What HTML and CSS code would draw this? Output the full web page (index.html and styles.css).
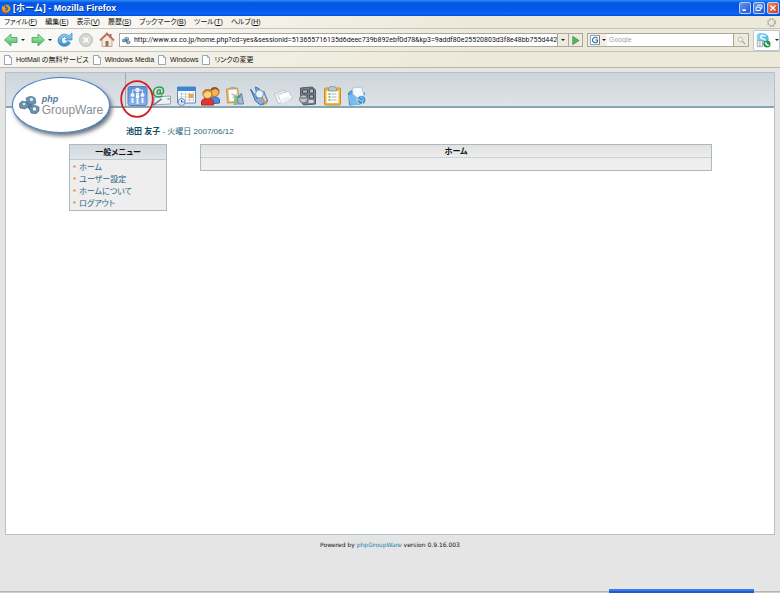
FILE: index.html
```html
<!DOCTYPE html>
<html lang="ja">
<head>
<meta charset="utf-8">
<title>[ホーム] - Mozilla Firefox</title>
<link rel="stylesheet" href="styles.css">
</head>
<body>
<svg class="defs" aria-hidden="true">
  <defs>
    <linearGradient id="green" x2="0" y2="1"><stop stop-color="#b5edac"/><stop offset="1" stop-color="#43b766"/></linearGradient>
    <linearGradient id="sky" x2="0" y2="1"><stop stop-color="#9ed7f5"/><stop offset="1" stop-color="#3189cc"/></linearGradient>
    <linearGradient id="tile" x2="0" y2="1"><stop stop-color="#5b8fd8"/><stop offset="1" stop-color="#8cb2e8"/></linearGradient>
    <symbol id="page" viewBox="0 0 10 10"><path d="M1.5.5h5l2 2v7h-7z" fill="#fff" stroke="#7b93ad" stroke-width=".8"/><path d="M6.5.5v2h2" fill="#d8e3ee" stroke="#7b93ad" stroke-width=".7"/></symbol>
    <symbol id="molecule" viewBox="0 0 22 18"><path d="M3 8l8-4 3 3-1 3 5 3-1 3-4 1-4-5-6-1z" fill="#557f9d"/><path d="M0 8l3-3 5 1 2 4-4 3-5-1zM7 2l5-2 4 2 1 5-4 2-5-2zM10 11l5-2 5 2v4l-3 3-5-1z" fill="#6991ad" stroke="#416a89" stroke-width=".6"/><circle cx="5" cy="8" r="1.300" fill="#dbe9f1"/><circle cx="12.500" cy="3.500" r="1.700" fill="#dbe9f1"/><circle cx="15.500" cy="13" r="1.700" fill="#eef6fa"/></symbol>
  </defs>
</svg>

<header class="browser">
  <div class="titlebar">
    <svg class="fox" viewBox="0 0 12 12"><circle cx="6" cy="6" r="5" fill="#246fc5"/><path d="M5 2c4-1 7 4 4 7-3 4-9 2-8-3L1 3l2 1 2-2-1 3 2 1-2 1c0 2 4 2 4-1z" fill="#f79b20"/><path d="M1 5c0 5 5 7 9 3-1 4-8 5-9 0z" fill="#d74a16"/></svg>
    <span class="window-title">[ホーム] - Mozilla Firefox</span>
    <div class="window-buttons">
      <button aria-label="最小化"><svg viewBox="0 0 12 12"><path d="M3 8.5h4" stroke="#fff" stroke-width="2"/></svg></button>
      <button aria-label="元に戻す"><svg viewBox="0 0 12 12"><path d="M4.5 4V2.5h5v4H8M2.5 5h5v4h-5z" fill="none" stroke="#fff" stroke-width="1.2"/></svg></button>
      <button class="close" aria-label="閉じる"><svg viewBox="0 0 12 12"><path d="M3 3l6 6M9 3l-6 6" stroke="#fff" stroke-width="1.6"/></svg></button>
    </div>
  </div>

  <nav class="menubar" aria-label="メニューバー">
    <button>ファイル(<u>F</u>)</button>
    <button>編集(<u>E</u>)</button>
    <button>表示(<u>V</u>)</button>
    <button>履歴(<u>S</u>)</button>
    <button>ブックマーク(<u>B</u>)</button>
    <button>ツール(<u>T</u>)</button>
    <button>ヘルプ(<u>H</u>)</button>
    <svg class="throbber" viewBox="0 0 12 12"><circle cx="6" cy="6" r="3.8" fill="none" stroke="#a9a9a0" stroke-width="2" stroke-dasharray="2 1"/></svg>
  </nav>

  <div class="toolbar">
    <div class="nav-buttons">
      <button class="with-arrow" aria-label="戻る"><svg viewBox="0 0 16 16"><path d="M1.500 8L8 2v3.500h6v5H8V14z" fill="url(#green)" stroke="#3da45b" stroke-width=".8"/></svg><i class="caret"></i></button>
      <button class="with-arrow" aria-label="進む"><svg viewBox="0 0 16 16"><path d="M14.500 8L8 2v3.500H2v5h6V14z" fill="url(#green)" stroke="#3da45b" stroke-width=".8"/></svg><i class="caret"></i></button>
      <button aria-label="更新"><svg viewBox="0 0 16 16"><path d="M12 4C8 0 1 3 1 8.500 1 14 9 17 13.500 11l-3-2c-2 4-6 3-6-.5C4.500 5 8 4 10 6L8 8h7V1z" fill="url(#sky)" stroke="#3384c1" stroke-width=".7"/></svg></button>
      <button aria-label="中止"><svg viewBox="0 0 16 16"><circle cx="8" cy="8" r="6.500" fill="#d5d5d1" stroke="#bebebb"/><path d="M5.500 5.500l5 5m0-5l-5 5" stroke="#fff" stroke-width="1.700"/></svg></button>
      <button aria-label="ホーム"><svg viewBox="0 0 16 16"><path d="M3 7v7.500h10V7L8 3z" fill="#f4e9dd" stroke="#a88b79" stroke-width=".7"/><path d="M10.500 2h2v4h-2z" fill="#b9674b"/><path d="M1 8.500L8 1.500l7 7" fill="none" stroke="#bd7358" stroke-width="1.800"/><path d="M6.500 9h3v5.500h-3z" fill="#9d7257"/></svg></button>
    </div>
    <form class="address">
      <svg viewBox="0 0 22 18"><use href="#molecule"/></svg>
      <input type="text" aria-label="アドレス" value="http://www.xx.co.jp/home.php?cd=yes&amp;sessionid=513655716135d6deec739b892ebf0d78&amp;kp3=9addf80e25520803d3f8e48bb755d442&amp;dor">
      <button type="button" class="drop" aria-label="履歴を表示"><i class="caret"></i></button>
      <button type="button" class="go" aria-label="移動"><svg viewBox="0 0 12 12"><path d="M3 1.500L10 6l-7 4.500z" fill="#56b45c" stroke="#2f8850" stroke-width=".7"/></svg></button>
    </form>
    <form class="search">
      <button type="button" class="engine" aria-label="検索エンジン"><svg viewBox="0 0 12 12"><path d="M.5.5h11v11H.5z" fill="#fff" stroke="#5c89b5"/><path d="M9 4C7 1.500 3 3 3 6s4 4.500 6 2V6H6.500" fill="none" stroke="#296ba8" stroke-width="1.400"/><path d="M11.500 1v5" stroke="#d64e3e"/><path d="M11.500 6v5" stroke="#3a9b4c"/></svg><i class="caret"></i></button>
      <input type="text" aria-label="検索" placeholder="Google">
      <button type="button" class="find" aria-label="検索する"><svg viewBox="0 0 12 12"><circle cx="4.500" cy="4.500" r="3" fill="#eef3f5" stroke="#a3abaf"/><path d="M7 7l4 4" stroke="#a6aba8" stroke-width="1.700"/></svg></button>
    </form>
    <button class="phone" aria-label="Skype"><svg viewBox="0 0 18 18"><circle cx="9" cy="8" r="6.500" fill="#56bde9"/><circle cx="6" cy="5" r="4" fill="#81d0ef"/><path d="M12 5C9 2.500 5 4.500 7 7c1 1 5 .5 5 3s-4 2.500-6 .5" fill="none" stroke="#fff" stroke-width="1.500"/><path d="M2.500 9.500h6v7h-6z" fill="#eee" stroke="#9da5a9"/><path d="M5.500 10v6" stroke="#a8b0b5"/><circle cx="13.500" cy="13.500" r="4" fill="#259447"/><path d="M12 11.500c0 2 1 3.500 3.500 3.500" fill="none" stroke="#fff" stroke-width="1.500"/></svg><i class="caret"></i></button>
  </div>

  <nav class="bookmarks" aria-label="ブックマーク">
    <a href="#"><svg viewBox="0 0 10 10"><use href="#page"/></svg>HotMail の無料サービス</a>
    <a href="#"><svg viewBox="0 0 10 10"><use href="#page"/></svg>Windows Media</a>
    <a href="#"><svg viewBox="0 0 10 10"><use href="#page"/></svg>Windows</a>
    <a href="#"><svg viewBox="0 0 10 10"><use href="#page"/></svg>リンクの変更</a>
  </nav>
</header>

<div class="viewport">
  <main class="site">
    <div class="site-header">
      <a class="logo" href="#" aria-label="phpGroupWare">
        <svg class="logo-mark" viewBox="0 0 22 18"><use href="#molecule"/></svg>
        <span class="logo-text"><em>php</em><span>GroupWare</span></span>
      </a>
      <nav class="apps" aria-label="アプリケーション">
        <a class="active" href="#" aria-label="ホーム"><svg viewBox="0 0 20 20"><rect x=".5" y=".5" width="19" height="19" rx="2" fill="url(#tile)" stroke="#5580c3"/><g fill="#eef5ff"><circle cx="5" cy="9" r="2"/><circle cx="10" cy="4" r="2.300"/><circle cx="15" cy="9" r="2"/><path d="M8.500 7h3v3h-3zM4 12h2v5H4zM9 13h2v5H9zM14 12h2v5h-2z"/></g><path d="M5 7V4h10v3M10 6v6" fill="none" stroke="#d6e6fa"/><circle cx="10" cy="11" r="1.800" fill="#fff"/></svg></a>
        <a href="#" aria-label="メール"><svg viewBox="0 0 20 20"><path d="M3 11l16-1v8L2 19z" fill="#edf1f6" stroke="#9aa6b2"/><path d="M2 19l8-6" stroke="#616c80" stroke-width="1.500"/><path d="M16 12h2v2h-2z" fill="#9ba9c2"/><path d="M9 4c-3-1-5 4-2 4 2 0 2-4 2-4s-1 4 1 4c3-1 3-7-2-7C0 1 0 11 7 11c2 0 3-.5 4-1" fill="none" stroke="#2e9c50" stroke-width="1.400"/></svg></a>
        <a href="#" aria-label="カレンダー"><svg viewBox="0 0 20 20"><path d="M1 1h18v16H1z" fill="#fff" stroke="#6387be"/><path d="M1 1h18v4H1z" fill="#3a87d3"/><path d="M3 8h14M3 11h14M3 14h14M5 6v10M9 6v10M13 6v10M17 6v10" stroke="#b4c9df" stroke-width=".8"/><path d="M12 8h5v4h-5z" fill="#f3a33c"/><circle cx="5" cy="16" r="3.500" fill="#d5e4f3" stroke="#7190b7"/><path d="M5 14v2h2" fill="none" stroke="#4d6891"/></svg></a>
        <a href="#" aria-label="アドレス帳"><svg viewBox="0 0 20 20"><path d="M9 18v-4c0-4 10-4 10 0v3z" fill="#4f8ce1" stroke="#3463b0"/><circle cx="14" cy="6" r="4.500" fill="#f3b64f" stroke="#a46231"/><path d="M10 5c0-5 8-5 9 0l-4-2z" fill="#9a542a"/><path d="M1 19v-3c0-5 12-5 12 0v3z" fill="#df3832" stroke="#b22726"/><circle cx="7" cy="8" r="4.500" fill="#ffd278" stroke="#ad672d"/><path d="M2 8c0-6 9-6 10-1L7 5z" fill="#c47935"/></svg></a>
        <a href="#" aria-label="プロジェクト"><svg viewBox="0 0 20 20"><path d="M2 3l11-1 2 14-12 1z" fill="#e9bd68" stroke="#c59448"/><path d="M4 4l8-.5 2 11-9 1z" fill="#fff"/><path d="M5 3c0-3 6-3 6 0" fill="#9ca9b0"/><path d="M7 8l5 2M8 12l7-5" stroke="#bbb" stroke-width="1.500"/><path d="M10 10h4l-1 9H9z" fill="#8dba8d"/><path d="M13 13l4-6 2 11h-5z" fill="#a9b8d7" stroke="#6582ab"/><path d="M12 11l4-3v4z" fill="#4da34b"/></svg></a>
        <a href="#" aria-label="検索"><svg viewBox="0 0 20 20"><path d="M1 3l5 12 5 4 4-2L10 3 6 1l2 12z" fill="#84afe1" stroke="#396cab"/><path d="M14 5l4 10-5 4" fill="none" stroke="#5c8ccb" stroke-width="1.500"/><circle cx="10" cy="8" r="4" fill="#e6f3fb" stroke="#809bb8"/><path d="M12 12l5 6" stroke="#df9744" stroke-width="2.200"/></svg></a>
        <a href="#" aria-label="文書"><svg viewBox="0 0 20 20"><path d="M1 8l10-4 4 9-10 5z" fill="#f5f8fb" stroke="#bbc5ce"/><path d="M4 9l11-4 4 7-10 6z" fill="#fff" stroke="#bec8d2"/><path d="M6 14l9-4 2 3-8 5z" fill="#edf1f7"/></svg></a>
        <a href="#" aria-label="ファイル管理"><svg viewBox="0 0 20 20"><path d="M3 2l12-1 3 3v14l-12 1-3-4z" fill="#777f8a" stroke="#535c68"/><path d="M5 4h5v3H5zM12 3h4v4h-4zM5 9h5v3H5zM12 9h4v3h-4z" fill="#b7c0c9" stroke="#444f5b"/><circle cx="6" cy="13" r="4" fill="#bec6d0" stroke="#6d7582"/><path d="M11 14h5v3h-5z" fill="#d4d8dd"/><path d="M3 12h6" stroke="#555e69"/></svg></a>
        <a href="#" aria-label="タスク"><svg viewBox="0 0 20 20"><rect x="2" y="2" width="16" height="17" rx="1" fill="#f0b83e" stroke="#c88d2a"/><path d="M4 5h12v12H4z" fill="#fff"/><path d="M6 4c0-5 8-5 8 0v1H6z" fill="#bcc6cd" stroke="#8b969d"/><path d="M6 8h2M6 11h2M6 14h2" stroke="#69a64e" stroke-width="1.500"/><path d="M9 8h5M9 11h5M9 14h5" stroke="#a3afbb"/></svg></a>
        <a href="#" aria-label="共有フォルダー"><svg viewBox="0 0 20 20"><path d="M2 7l4-3 3 3h9l-3 11-12 1z" fill="#5ca3df" stroke="#3d80be"/><path d="M6 2l9-1 3 10-11 2z" fill="#f7fafc" stroke="#b7c8d6"/><path d="M1 9h7l2 2h6l-4 8H4z" fill="#76bced"/><circle cx="15" cy="14" r="4.500" fill="#3c91ce" stroke="#fff" stroke-width=".7"/><path d="M14 11c5 2 1 5 2 7M11 13l4 2" fill="none" stroke="#d0e8f6"/></svg></a>
      </nav>
      <svg class="marker" viewBox="0 0 34 38" aria-hidden="true"><ellipse cx="17" cy="19" rx="15.800" ry="17.800" fill="none" stroke="#d31d26" stroke-width="1.800"/></svg>
    </div>

    <p class="user"><strong>池田 友子</strong> - 火曜日 2007/06/12</p>

    <div class="columns">
      <section class="panel sidebar">
        <h2>一般メニュー</h2>
        <ul>
          <li><a href="#">ホーム</a></li>
          <li><a href="#">ユーザー設定</a></li>
          <li><a href="#">ホームについて</a></li>
          <li><a href="#">ログアウト</a></li>
        </ul>
      </section>
      <section class="panel home">
        <h1>ホーム</h1>
        <div class="panel-body"></div>
      </section>
    </div>
  </main>
  <footer>Powered by <a href="#">phpGroupWare</a> version 0.9.16.003</footer>
  <div class="statusbar"><div class="language-bar"></div></div>
</div>
</body>
</html>
```
FILE: styles.css
```css
* { box-sizing: border-box; }

body {
  margin: 0;
  min-height: 100vh;
  display: flex;
  flex-direction: column;
  background: #e5e5e5;
  color: #111;
  font: 8px/12px "Liberation Sans", "Noto Sans CJK JP", sans-serif;
  font-feature-settings: "palt";
}

button, input { font: inherit; font-feature-settings: inherit; color: inherit; border: 0; padding: 0; margin: 0; background: none; }
button { display: flex; align-items: center; justify-content: center; }
a { color: inherit; text-decoration: none; }
svg { display: block; flex: none; }
h1, h2, p, ul { margin: 0; padding: 0; }
.defs { position: absolute; width: 0; height: 0; }

.caret {
  flex: none;
  border: 2px solid transparent;
  border-top-color: #222;
  border-bottom: 0;
}

/* Browser window */
.titlebar {
  display: flex;
  align-items: center;
  gap: 1px;
  height: 16px;
  padding: 0 1px;
  background: linear-gradient(#2b91fa 0, #0754e2 3px, #0559ef 10px, #0767fb 14px, #0444c1);
  color: #fff;
}
.fox { width: 11px; height: 11px; }
.window-title {
  flex: 1;
  font: bold 9px/14px "Liberation Sans", "Noto Sans CJK JP", sans-serif;
  text-shadow: 1px 1px #08378f;
}
.window-buttons { display: flex; gap: 2px; }
.window-buttons button {
  width: 12px;
  height: 12px;
  border: 1px solid #b7d0fb;
  border-radius: 2px;
  background: linear-gradient(135deg, #6795ef, #2457cb);
}
.window-buttons .close { background: linear-gradient(135deg, #ef8967, #c93c19); }
.window-buttons svg { width: 10px; height: 10px; }

.menubar {
  display: flex;
  align-items: center;
  gap: 8px;
  height: 13px;
  padding: 0 3px 0 4px;
  background: linear-gradient(90deg, #fbfbfb, #ece9da 60%);
  border-bottom: 1px solid #c9c6b8;
  font-size: 7px;
}
.throbber { width: 11px; height: 11px; margin-left: auto; }

.toolbar {
  display: flex;
  align-items: center;
  gap: 4px;
  height: 23px;
  padding-left: 3px;
  background: linear-gradient(90deg, #fafafa, #ece9da 60%);
  border-bottom: 1px solid #c9c6b8;
}
.nav-buttons { display: flex; gap: 5px; }
.nav-buttons svg { width: 16px; height: 16px; }
.with-arrow { width: 22px; gap: 2px; }
.address, .search {
  display: flex;
  height: 14px;
  border: 1px solid #aaa89e;
  background: #fff;
}
.address { flex: 1; min-width: 0; align-items: center; }
.address > svg { width: 9px; height: 9px; margin: 0 3px 0 2px; }
.address input {
  flex: 1;
  min-width: 0;
  height: 12px;
  font: 7px/12px Roboto, "Liberation Sans", sans-serif;
}
.drop, .go, .find { height: 12px; border-left: 1px solid #aaa89e; background: #eeebdd; }
.drop { width: 11px; }
.go { width: 14px; }
.go svg { width: 11px; height: 11px; }
.search { width: 162px; }
.engine { width: 19px; gap: 2px; background: #f0eee5; }
.engine svg { width: 10px; height: 10px; }
.search input { flex: 1; min-width: 0; padding-left: 2px; font-size: 7px; }
.search input::placeholder { color: #a4a4a4; opacity: 1; }
.find { width: 15px; }
.find svg { width: 9px; height: 9px; }
.phone {
  width: 27px;
  height: 21px;
  gap: 4px;
  border: 1px solid #bec7ce;
  border-radius: 2px;
  background: #fff;
}
.phone svg { width: 16px; height: 16px; }

.bookmarks {
  display: flex;
  align-items: center;
  gap: 3px;
  height: 16px;
  padding-left: 3px;
  background: linear-gradient(90deg, #f7f6f0, #ece9d8 60%);
  border-bottom: 1px solid #b9b7a9;
  font-size: 7px;
}
.bookmarks a { display: flex; align-items: center; gap: 3px; }
.bookmarks svg { width: 10px; height: 10px; }

/* Web page */
.viewport { flex: 1; display: flex; flex-direction: column; padding-top: 4px; }
.site {
  flex: 1;
  margin: 0 5px;
  background: #fff;
  border: 1px solid #b5c3c9;
}
.site-header {
  position: relative;
  height: 35px;
  padding-left: 119px;
  background: linear-gradient(#ccd5db, #dfe3e7);
  border-bottom: 2px solid #8aa5b2;
}
.logo {
  position: absolute;
  left: 6px;
  top: 4px;
  display: flex;
  align-items: center;
  justify-content: center;
  gap: 1px;
  width: 98px;
  height: 56px;
  border: 1px solid #447fc8;
  border-radius: 50%;
  background: #fff;
  box-shadow: 2px 3px 4px #68717c;
}
.logo-mark { width: 22px; height: 18px; }
.logo-text { color: #888f98; font: 12px/12px "Liberation Sans", sans-serif; }
.logo-text em { display: block; color: #52799d; font-size: 9px; line-height: 9px; font-weight: bold; }
.logo-text > span { display: block; }
.apps {
  display: flex;
  justify-content: space-between;
  align-items: center;
  width: 244px;
  height: 33px;
  padding: 13px 2px 0 1px;
  border-left: 1px solid #9caab2;
}
.apps svg { width: 21px; height: 20px; }
.marker {
  position: absolute;
  left: 114px;
  top: 7px;
  width: 34px;
  height: 38px;
}

.user { padding: 18px 0 6px 120px; color: #29647b; }
.user strong { color: #145069; }
.columns {
  display: grid;
  grid-template-columns: 98px 1fr;
  align-items: start;
  gap: 33px;
  padding: 0 62px 0 63px;
}
.panel { border: 1px solid #a9bbc0; background: #eee; }
.panel h1, .panel h2 {
  padding-top: 2px;
  font-size: 8px;
  line-height: 12px;
  text-align: center;
  color: #111;
}
.panel h2 { background: linear-gradient(#d2d8df, #e1e4e8); border-bottom: 1px solid #c0cbcf; }
.panel h1 { line-height: 10px; background: linear-gradient(#e1e1e1, #ededed); border-bottom: 1px dotted #b9c4c4; }
.panel-body { height: 12px; }
.sidebar ul { list-style: none; padding: 2px 3px 0; }
.sidebar li { display: flex; gap: 3px; color: #1e6480; }
.sidebar li::before { content: "*"; color: #ed8a3c; font-weight: bold; }

footer {
  padding: 4px 0 2px;
  text-align: center;
  font: 6px/12px "DejaVu Sans", sans-serif;
}
footer a { color: #2082b3; }
.statusbar {
  height: 40px;
  display: flex;
  align-items: flex-end;
  justify-content: flex-end;
  padding-right: 26px;
  background: linear-gradient(transparent 38px, #aaa99c 38px, #dedbd0);
}
.language-bar {
  width: 145px;
  height: 4px;
  background: #2256d3;
  border-top: 2px solid #397ceb;
}
```
